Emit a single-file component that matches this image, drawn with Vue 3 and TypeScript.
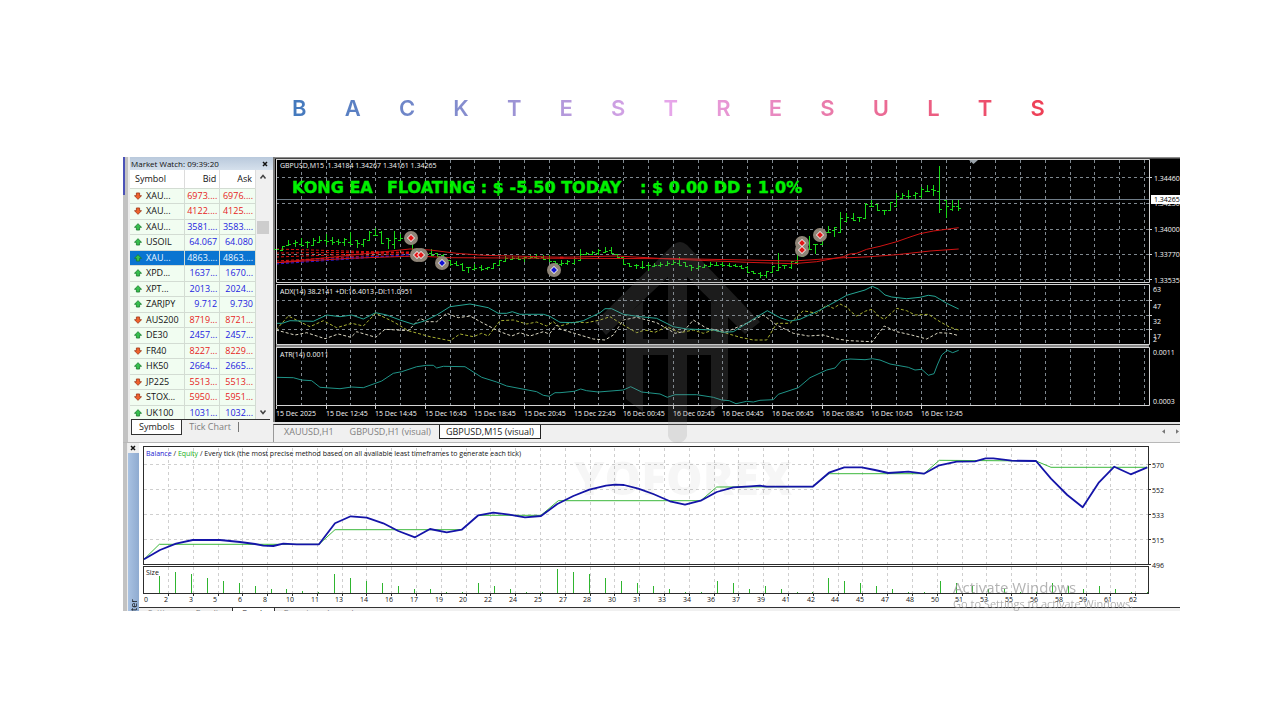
<script setup lang="ts">
import { ref } from 'vue'

const title: string[] = 'BACKTESTRESULTS'.split('')

interface Quote { symbol: string; bid: string; ask: string; up: boolean; tone: 'up' | 'down' }
const q = (symbol: string, bid: string, ask: string, up: boolean): Quote =>
  ({ symbol, bid, ask, up, tone: up ? 'up' : 'down' })

const quotes: Quote[] = [
  q('XAU...', '6973....', '6976....', false),
  q('XAU...', '4122....', '4125....', false),
  q('XAU...', '3581....', '3583....', true),
  q('USOIL', '64.067', '64.080', true),
  q('XAU...', '4863....', '4863....', true),
  q('XPD...', '1637...', '1670...', true),
  q('XPT...', '2013...', '2024...', true),
  q('ZARJPY', '9.712', '9.730', true),
  q('AUS200', '8719...', '8721...', false),
  q('DE30', '2457...', '2457...', true),
  q('FR40', '8227...', '8229...', false),
  q('HK50', '2664...', '2665...', true),
  q('JP225', '5513...', '5513...', false),
  q('STOX...', '5950...', '5951...', false),
  q('UK100', '1031...', '1032...', true),
]
const selected = ref(4)

type Pt = [number, number]
type Segment = { x: number; y: number; pts: Pt[] }

/* Samples are stored in thirds of a unit, relative to the origin of their segment. */
const trace = (segments: Segment[]): string =>
  segments
    .flatMap(s => s.pts.map(([px, py]) => `${(s.x + px / 3).toFixed(1)},${(s.y + py / 3).toFixed(1)}`))
    .join(' ')

const fastAverage = trace([
  { x: 270, y: 150, pts: [[18, 338], [200, 320], [420, 297], [480, 300], [560, 310], [640, 316], [880, 322]] },
  { x: 560, y: 150, pts: [[0, 322], [170, 318], [350, 328], [560, 337], [700, 341], [770, 335], [850, 320]] },
  { x: 850, y: 150, pts: [[0, 312], [20, 310], [50, 298], [90, 289], [140, 275], [180, 261], [210, 251], [250, 243], [326, 233]] },
])
const slowAverage = trace([
  { x: 270, y: 150, pts: [[18, 338], [240, 325], [440, 318], [540, 323], [880, 325]] },
  { x: 560, y: 150, pts: [[0, 325], [350, 326], [560, 330], [700, 333], [850, 323]] },
  { x: 850, y: 150, pts: [[0, 323], [60, 320], [140, 314], [240, 303], [326, 297]] },
])
const adxLine = trace([
  { x: 270, y: 280, pts: [[18, 130], [37, 130], [60, 122], [130, 124], [170, 105], [210, 110], [245, 105], [280, 117], [317, 98], [350, 105], [390, 120], [430, 133], [466, 122], [500, 105], [540, 80], [600, 72], [655, 83], [685, 100], [710, 100], [727, 95], [750, 103], [820, 103], [838, 108], [865, 124]] },
  { x: 560, y: 280, pts: [[0, 127], [43, 128], [70, 122], [120, 98], [135, 86], [155, 86], [190, 103], [240, 110], [290, 115], [340, 140], [380, 147], [460, 150], [490, 157], [520, 155], [600, 105], [622, 92], [660, 113], [690, 123], [720, 118], [780, 90], [830, 63], [860, 46]] },
  { x: 850, y: 280, pts: [[0, 43], [45, 30], [67, 19], [85, 27], [105, 45], [125, 51], [170, 56], [210, 52], [235, 46], [255, 49], [290, 70], [326, 87]] },
])
const plusDi = trace([
  { x: 270, y: 280, pts: [[18, 150], [55, 108], [120, 140], [160, 122], [200, 143], [245, 130], [280, 138], [317, 100], [370, 125], [415, 152], [480, 170], [540, 182], [570, 162], [610, 170], [635, 160], [655, 168], [690, 122], [730, 120], [770, 132], [800, 126], [830, 138], [850, 125], [868, 140]] },
  { x: 560, y: 280, pts: [[0, 138], [43, 126], [80, 128], [120, 120], [150, 110], [190, 135], [230, 158], [255, 150], [285, 157], [320, 140], [360, 158], [400, 150], [430, 160], [460, 150], [500, 160], [540, 172], [580, 180], [620, 180], [650, 130], [690, 130], [730, 92], [770, 100], [800, 75], [820, 85], [840, 72], [865, 84]] },
  { x: 850, y: 280, pts: [[0, 93], [20, 108], [47, 93], [67, 88], [85, 108], [103, 118], [140, 85], [170, 92], [195, 105], [235, 103], [270, 125], [300, 142], [326, 150]] },
])
const minusDi = trace([
  { x: 270, y: 280, pts: [[18, 150], [75, 165], [110, 158], [165, 176], [205, 162], [243, 172], [260, 155], [317, 172], [345, 148], [415, 152], [450, 115], [470, 125], [500, 125], [530, 100], [565, 113], [600, 108], [640, 130], [690, 155], [725, 168], [750, 158], [780, 168], [820, 155], [838, 162], [860, 135]] },
  { x: 560, y: 280, pts: [[0, 147], [43, 160], [100, 177], [135, 180], [160, 165], [190, 120], [230, 112], [260, 120], [290, 128], [345, 160], [370, 155], [400, 120], [440, 145], [500, 155], [560, 130], [610, 105], [650, 135], [700, 160], [745, 168], [790, 165], [830, 177]] },
  { x: 850, y: 280, pts: [[0, 182], [67, 185], [103, 138], [140, 155], [185, 165], [230, 177], [265, 158], [300, 160], [326, 167]] },
])
const atrLine = trace([
  { x: 270, y: 280, pts: [[18, 292], [70, 293], [95, 300], [125, 302], [150, 322], [210, 326], [245, 321], [280, 323], [335, 303], [370, 280], [395, 275], [440, 260], [470, 256], [490, 256], [500, 264], [520, 259], [585, 260], [635, 292], [680, 306], [710, 318], [800, 335], [820, 346], [838, 349], [855, 338]] },
  { x: 560, y: 280, pts: [[0, 338], [43, 334], [62, 327], [80, 332], [115, 336], [190, 330], [212, 320], [245, 336], [300, 342], [322, 352], [345, 344], [410, 344], [460, 352], [485, 360], [508, 362], [528, 371], [560, 364], [580, 366], [600, 361], [640, 359], [655, 343], [715, 323], [750, 293], [800, 270], [825, 264], [845, 241]] },
  { x: 850, y: 280, pts: [[0, 237], [45, 239], [67, 236], [90, 240], [120, 252], [175, 262], [195, 270], [215, 268], [235, 286], [252, 281], [262, 255], [275, 225], [292, 211], [308, 218], [326, 211]] },
])

/* High and low of every bar, oldest first. */
const bars: Pt[] = [
  [249, 253], [246, 251], [240, 246], [240, 247], [238, 246], [241, 248], [238, 246], [236, 243],
  [234, 245], [237, 245], [239, 245], [238, 246], [232, 245], [240, 248], [239, 247], [231, 241],
  [228, 236], [231, 244], [238, 249], [231, 249], [234, 241], [233, 243], [241, 250], [250, 259],
  [250, 256], [249, 256], [253, 257], [254, 260], [260, 266], [261, 266], [263, 271], [267, 273],
  [264, 270], [265, 271], [267, 270], [263, 269], [260, 266], [256, 262], [256, 260], [256, 260],
  [256, 262], [255, 259], [254, 259], [255, 260], [255, 262], [261, 267], [260, 266], [260, 265],
  [258, 264], [249, 261], [252, 255], [251, 255], [249, 255], [247, 253], [247, 254], [254, 258],
  [257, 265], [263, 267], [264, 269], [261, 269], [263, 271], [263, 267], [262, 267], [261, 266],
  [260, 265], [257, 266], [262, 267], [265, 271], [265, 269], [264, 268], [262, 267], [262, 266],
  [262, 267], [263, 267], [264, 267], [265, 269], [266, 273], [271, 274], [272, 278], [271, 278],
  [266, 273], [253, 271], [265, 269], [261, 269], [253, 263], [245, 257], [236, 250], [244, 254],
  [238, 245], [226, 233], [227, 237], [212, 233], [213, 222], [213, 221], [217, 222], [203, 219],
  [200, 207], [204, 211], [210, 215], [202, 211], [193, 207], [193, 199], [190, 199], [192, 199],
  [187, 198], [185, 192], [185, 196], [166, 213], [200, 218], [200, 211], [200, 211],
]
const clamp = (v: number, lo: number, hi: number): number => Math.max(lo, Math.min(hi, v))
const mid = (i: number): number => (bars[i][0] + bars[i][1]) / 2
const barPath: string = bars
  .map(([hi, lo], i) => {
    const x = Math.round(276 + i * 6.2) + 0.5
    const open = Math.round(clamp(i ? mid(i - 1) : hi, hi, lo - 1)) + 0.5
    const close = Math.round(clamp(i < bars.length - 1 ? mid(i + 1) : 208, hi, lo - 1)) + 0.5
    return `M${x} ${hi}V${lo}M${x - 2.5} ${open}H${x}M${x} ${close}H${x + 2.5}`
  })
  .join('')

const gridX: number[] = Array.from({ length: 35 }, (_, i) => Math.round(301.7 + i * 24.8) - 0.5)
const priceRows: number[] = [177.5, 203.5, 229.5, 254.5, 279.5]
const adxRows: number[] = [300.5, 315.5, 329.5]
const prices = [
  { y: 181, label: '1.34460' }, { y: 206, label: '1.34230' }, { y: 232, label: '1.34000' },
  { y: 257, label: '1.33770' }, { y: 283, label: '1.33535' },
]
const adxLabels = [
  { y: 292, label: '63' }, { y: 309, label: '47' }, { y: 324, label: '32' },
  { y: 339, label: '17' }, { y: 342, label: '2' },
]
const times: string[] = [
  '15 Dec 2025', '15 Dec 12:45', '15 Dec 14:45', '15 Dec 16:45', '15 Dec 18:45', '15 Dec 20:45', '15 Dec 22:45',
  '16 Dec 00:45', '16 Dec 02:45', '16 Dec 04:45', '16 Dec 06:45', '16 Dec 08:45', '16 Dec 10:45', '16 Dec 12:45',
]
const markers = [
  { x: 411, y: 238, c: '#e01818' }, { x: 417, y: 255, c: '#e01818' }, { x: 421, y: 255, c: '#e01818' },
  { x: 442, y: 263, c: '#1010d0' }, { x: 554, y: 270, c: '#1010d0' }, { x: 802, y: 243, c: '#e01818' },
  { x: 802, y: 250, c: '#e01818' }, { x: 820, y: 235, c: '#e01818' },
]

const balance = trace([
  { x: 120, y: 435, pts: [[72, 373], [120, 345], [168, 326], [218, 315], [300, 315], [360, 321], [405, 327], [430, 332], [460, 333], [490, 326], [530, 328], [597, 328], [645, 265], [692, 244], [740, 248], [790, 265], [835, 288], [885, 307], [930, 282], [980, 292], [1025, 284]] },
  { x: 470, y: 435, pts: [[25, 241], [70, 233], [118, 239], [165, 247], [213, 243], [262, 207], [310, 183], [358, 164], [408, 152], [435, 149], [462, 150], [505, 161], [550, 177], [600, 199], [645, 209], [692, 197], [740, 171], [790, 157], [840, 154], [870, 152], [890, 155], [1028, 155]] },
  { x: 820, y: 435, pts: [[27, 113], [73, 97], [125, 97], [165, 105], [205, 114], [265, 110], [312, 116], [358, 91], [410, 80], [465, 79], [497, 70], [520, 70], [575, 77], [648, 78], [693, 131], [742, 180], [788, 217], [837, 142], [883, 95], [932, 118], [982, 97]] },
])
const equity = trace([
  { x: 120, y: 435, pts: [[72, 373], [118, 328], [597, 328], [645, 284], [1025, 284]] },
  { x: 470, y: 435, pts: [[25, 241], [213, 241], [265, 197], [692, 197], [740, 156], [1028, 155]] },
  { x: 820, y: 435, pts: [[27, 116], [312, 116], [358, 76], [648, 78], [693, 97], [982, 97]] },
])
const lots: number[] = [
  17, 21, 19, 15, 12, 10, 7, 4, 4, 2, 1, 19, 15, 12, 10, 7, 4, 4, 1, 1, 10, 7, 4, 1, 1, 24, 21, 19, 15, 12, 10, 7,
  4, 1, 1, 12, 10, 4, 7, 4, 1, 1, 15, 12, 10, 7, 4, 1, 1, 12, 10, 7, 4, 4, 1, 1, 10, 7, 4, 7, 4, 1, 1,
]
const lotPath: string = lots.map((h, i) => `M${Math.round(143 + (i + 1) * 15.94) + 0.5} 593v${-h}`).join('')
const testerX: number[] = Array.from({ length: 40 }, (_, i) => Math.round(168 + i * 24.8) + 0.5)
const testerRows = [
  { y: 464.5, label: '570' }, { y: 489.5, label: '552' }, { y: 514.5, label: '533' },
  { y: 539.5, label: '515' }, { y: 564.5, label: '496' },
]
const tradeNumbers: number[] = [
  0, 2, 3, 5, 6, 8, 10, 11, 13, 14, 16, 17, 19, 20, 22, 24, 25, 27, 28, 30, 31, 33, 34, 36, 37, 39, 41, 42, 44, 45,
  47, 48, 50, 51, 53, 55, 56, 58, 59, 61, 62,
]
</script>

<template>
  <main class="page">
    <h1 class="title"><span v-for="(letter, i) in title" :key="i">{{ letter }}</span></h1>

    <div class="terminal">
      <div class="upper">
        <div class="edge"><i></i></div>

        <section class="watch">
          <header class="watch-head">
            <span>Market Watch: 09:39:20</span>
            <button type="button" aria-label="Close market watch">
              <svg viewBox="0 0 6 6" width="6" height="6"><path d="M1 1l4 4M5 1l-4 4" stroke="#111" stroke-width="1.5" /></svg>
            </button>
          </header>
          <div class="watch-body">
            <table>
              <thead>
                <tr><th>Symbol</th><th class="num">Bid</th><th class="num">Ask</th></tr>
              </thead>
              <tbody>
                <tr v-for="(row, i) in quotes" :key="i" :class="[row.tone, { selected: i === selected }]" @click="selected = i">
                  <td>
                    <svg viewBox="0 0 10 10" width="8" height="8" :class="{ flip: !row.up }">
                      <path d="M5 .8L9.4 5.4H7V8.8H3V5.4H.6Z" :fill="row.up ? '#35c04c' : '#f0622c'" :stroke="row.up ? '#177a2b' : '#9c3414'" stroke-width="1" />
                    </svg>{{ row.symbol }}
                  </td>
                  <td class="num">{{ row.bid }}</td>
                  <td class="num">{{ row.ask }}</td>
                </tr>
              </tbody>
            </table>
            <div class="scroll">
              <svg viewBox="0 0 8 6" width="8" height="6"><path d="M1.5 4.5L4 1.5l2.5 3" /></svg>
              <b></b>
              <svg viewBox="0 0 8 6" width="8" height="6"><path d="M1.5 1.5L4 4.5l2.5-3" /></svg>
            </div>
          </div>
          <nav class="watch-tabs">
            <button type="button" class="on">Symbols</button>
            <button type="button">Tick Chart</button>
          </nav>
        </section>

        <section class="market">
          <svg class="plot" viewBox="273 157 907 267">
            <rect x="273" y="157" width="907" height="267" fill="#000" />
            <path d="M273 157.5H1180" stroke="#8c8c8c" stroke-width="2" />
            <path d="M274 157V424" stroke="#7a7a7a" stroke-width="2" />
            <path d="M273 423H1180" stroke="#e4e4e4" stroke-width="2" />

            <g stroke="#7f888f" stroke-width="1" stroke-dasharray="3 3">
              <path v-for="x in gridX" :key="x" :d="`M${x} 160V282M${x} 286V344M${x} 349V405`" />
              <path v-for="y in priceRows" :key="y" :d="`M276 ${y}H1149`" />
              <path v-for="y in adxRows" :key="y" :d="`M276 ${y}H1149`" />
            </g>
            <path d="M276 199.5H1149" stroke="#6f7c88" />

            <g fill="none" stroke-width="1">
              <path d="M276 249L417 253M276 253L417 252M276 257L417 252M276 261L417 253" stroke="#e01010" stroke-dasharray="3 2" />
              <path d="M276 264L350 259L417 254M276 263L360 257L417 256" stroke="#2a18d8" stroke-dasharray="3 2" />
              <path :d="barPath" stroke="#18d818" />
              <polyline :points="fastAverage" stroke="#d01414" />
              <polyline :points="slowAverage" stroke="#d01414" />
              <polyline :points="plusDi" stroke="#a8b032" stroke-dasharray="3 2" />
              <polyline :points="minusDi" stroke="#dcd8c4" stroke-dasharray="3 2" />
              <polyline :points="adxLine" stroke="#26a594" />
              <polyline :points="atrLine" stroke="#1f9488" />
            </g>

            <circle v-for="(m, i) in markers" :key="'c' + i" :cx="m.x" :cy="m.y" r="7" fill="#8f8578" />
            <g v-for="(m, i) in markers" :key="'d' + i">
              <path :d="`M${m.x} ${m.y - 4}l4 4l-4 4l-4 -4z`" fill="#fff" />
              <path :d="`M${m.x} ${m.y - 3}l3 3l-3 3l-3 -3z`" :fill="m.c" />
            </g>

            <g fill="none" stroke="#d4d4d4">
              <path d="M276 159.5H1149.5V282.5H276.5V159.5" />
              <path d="M276 284.5H1149.5V344.5H276.5V284.5" />
              <path d="M276 347.5H1149.5V405.5H276.5V347.5" />
              <path d="M276 346H1149" stroke="#8a8a8a" stroke-width="2" />
              <path v-for="(t, i) in times" :key="t" :d="`M${Math.round(276 + i * 49.6) + 0.5} 406v3`" />
              <path d="M1150 177.5h2M1150 229.5h2M1150 254.5h2M1150 279.5h2M1150 300.5h2M1150 315.5h2M1150 329.5h2" />
            </g>
            <path d="M969 160h9l-4.500 4z" fill="#9aa3ab" />

            <text class="banner" x="292" y="193">KONG EA</text>
            <text class="banner" x="387" y="193">FLOATING : $ -5.50 TODAY</text>
            <text class="banner" x="640" y="193">: $ 0.00 DD : 1.0%</text>

            <g class="tiny" fill="#f6f6f6">
              <text x="280" y="168">GBPUSD,M15&nbsp; 1.34184 1.34267 1.34161 1.34265</text>
              <text x="280" y="294">ADX(14) 38.2141 +DI:16.4013 -DI:11.0951</text>
              <text x="280" y="357">ATR(14) 0.0011</text>
              <text v-for="p in prices" :key="p.label" x="1154" :y="p.y">{{ p.label }}</text>
              <text v-for="p in adxLabels" :key="p.label" x="1153" :y="p.y">{{ p.label }}</text>
              <text x="1153" y="355">0.0011</text>
              <text x="1153" y="404">0.0003</text>
              <text v-for="(t, i) in times" :key="t" :x="Math.round(276 + i * 49.6)" y="416">{{ t }}</text>
            </g>
            <rect x="1151" y="195" width="29" height="9" fill="#fff" />
            <text class="tiny" x="1154" y="202" fill="#000">1.34265</text>
          </svg>
          <nav class="chart-tabs">
            <button type="button">XAUUSD,H1</button>
            <button type="button">GBPUSD,H1 (visual)</button>
            <button type="button" class="on">GBPUSD,M15 (visual)</button>
            <span class="pager">
              <svg viewBox="0 0 4 6" width="3" height="5"><path d="M4 0v6L0 3z" fill="#777" /></svg>
              <svg viewBox="0 0 4 6" width="3" height="5"><path d="M0 0v6L4 3z" fill="#777" /></svg>
            </span>
          </nav>
        </section>
      </div>

      <section class="lower">
        <div class="edge"></div>
        <div class="tester-side">
          <button type="button" aria-label="Close tester">
            <svg viewBox="0 0 6 6" width="6" height="6"><path d="M1 1l4 4M5 1l-4 4" stroke="#111" stroke-width="1.5" /></svg>
          </button>
          <div class="tester-bar"><span>Tester</span></div>
        </div>
        <div class="tester">
          <svg class="plot" viewBox="139 443 1041 164">
            <g stroke="#cfcfcf" stroke-dasharray="3 3">
              <path v-for="x in testerX" :key="x" :d="`M${x} 448V564M${x} 567V593`" />
              <path v-for="r in testerRows.slice(0, 4)" :key="r.y" :d="`M144 ${r.y}H1148`" />
            </g>
            <path :d="lotPath" stroke="#2fb52f" />
            <polyline :points="equity" fill="none" stroke="#3cb83c" />
            <polyline :points="balance" fill="none" stroke="#1414a8" stroke-width="1.8" stroke-linejoin="round" />
            <g fill="none" stroke="#2c2c2c">
              <rect x="143.5" y="446.5" width="1005" height="118" />
              <rect x="143.5" y="566.5" width="1005" height="27" />
              <path v-for="r in testerRows" :key="r.y" :d="`M1149 ${r.y}h2`" />
              <path v-for="x in testerX" :key="x" :d="`M${x} 594v2`" />
            </g>
            <g class="tiny" fill="#111">
              <text x="146" y="456"><tspan fill="#1818d0">Balance</tspan> / <tspan fill="#18b018">Equity</tspan> / Every tick (the most precise method based on all available least timeframes to generate each tick)</text>
              <text x="146" y="575">Size</text>
              <text v-for="r in testerRows" :key="r.y" x="1152" :y="r.y + 3">{{ r.label }}</text>
              <text v-for="(n, i) in tradeNumbers" :key="n" :x="i ? Math.round(141 + i * 24.8) : 146" y="602" text-anchor="middle">{{ n }}</text>
            </g>
          </svg>
          <nav class="tester-tabs">
            <button type="button">Settings</button>
            <button type="button">Results</button>
            <button type="button" class="on">Graph</button>
            <button type="button">Report</button>
            <button type="button">Journal</button>
          </nav>
        </div>
      </section>

      <svg class="watermark" viewBox="123 157 1057 454" aria-hidden="true">
        <path class="arrow" d="M673 245q7-6 14 0L760 322L745 334L687 277V339H711V301L728 316V399L711 412V355H687V436a10 10 0 0 1-19 0V355H643V412L626 399V316L643 301V339H668V277L606 335L595 322Z" />
        <text class="brand" x="574" y="495">YOFOREX</text>
        <g class="activate">
          <text class="activate-big" x="953" y="593">Activate Windows</text>
          <text class="activate-small" x="953" y="608">Go to Settings to activate Windows.</text>
        </g>
      </svg>
    </div>
  </main>
</template>

<style>
body { margin: 0; background: #fff; }
</style>

<style scoped>
.page {
  box-sizing: border-box;
  padding: 92px 100px 40px 123px;
  font-family: "Open Sans", "Noto Sans", sans-serif;
  font-size: 9px;
  color: #111;
}
.title {
  display: flex;
  justify-content: space-between;
  margin: 0 135px 33px 169px;
  font: 600 22px/32px Inter, sans-serif;
  color: transparent;
  background: linear-gradient(90deg, #4379bd, #8c8fd0 25%, #e6a6ea 50%, #ee3f55);
  -webkit-background-clip: text;
  background-clip: text;
}
button {
  padding: 0;
  border: 0;
  background: none;
  font: inherit;
  color: inherit;
}
.terminal { position: relative; overflow: hidden; background: #f0f0f0; }
.upper { display: flex; }
.edge { box-sizing: border-box; width: 7px; flex: none; background: #c2c2c2; border-right: 2px solid #ececec; }
.edge i { display: block; width: 2px; height: 38px; background: #4b52b8; }
.lower .edge { width: 5px; border-right-width: 1px; }

.watch { width: 143px; flex: none; display: flex; flex-direction: column; background: #f0f0f0; }
.watch-head {
  display: flex;
  justify-content: space-between;
  align-items: center;
  height: 13px;
  padding: 0 5px 0 1px;
  background: linear-gradient(#b9c9dc, #d5e0ec);
  font-size: 8px;
  line-height: 12px;
}
.watch-head span { font-weight: 500; }
.watch-head button { display: flex; }
.watch-body { display: flex; height: 249px; overflow: hidden; }
table { width: 126px; height: 250px; border-collapse: collapse; table-layout: fixed; background: #fff; }
th, td { box-sizing: border-box; padding: 0; font-weight: 400; text-align: left; line-height: 12px; white-space: nowrap; overflow: hidden; }
th:first-child { width: 54px; }
thead tr { height: 18px; }
th { border-right: 1px solid #dcdcdc; padding-left: 5px; }
th.num { padding: 0 3px 0 0; }
td { border: 1px solid #d3dcd3; border-width: 1px 1px 0 0; background: #f1fdf1; }
td:first-child { padding-left: 4px; }
.num { text-align: right; padding-right: 2px; }
td svg { margin-right: 4px; vertical-align: -1px; }
.flip { transform: rotate(180deg); }
.up .num { color: #1c1ce0; }
.down .num { color: #e61c1c; }
.selected td, .selected .num { background: #0a74d1; color: #e8f4ff; }
.scroll {
  display: flex;
  flex-direction: column;
  align-items: center;
  justify-content: space-between;
  width: 14px;
  padding: 4px 0 4px;
  box-sizing: border-box;
}
.scroll b { width: 12px; height: 13px; margin-bottom: 134px; background: #cdcdcd; }
.scroll path { fill: none; stroke: #444; stroke-width: 1.5; }
.watch-tabs { display: flex; align-items: flex-start; height: 17px; margin: 0 3px 0 1px; border-top: 1px solid #333; line-height: 14px; }
.watch-tabs button { padding: 0 7px; color: #808080; }
.watch-tabs button:last-child { line-height: 10px; margin-top: 2px; border-right: 1px solid #777; }
.watch-tabs .on { border: 1px solid #333; border-top: 0; background: #fff; color: #1c1c1c; }

.market { flex: 1; min-width: 0; }
.plot { display: block; width: 100%; height: auto; }
.chart-tabs { display: flex; align-items: flex-start; height: 17px; border-top: 1px solid #333; border-left: 1px solid #999; color: #808080; }
.chart-tabs button { height: 14px; padding: 0 8px; line-height: 14px; }
.chart-tabs button:first-child { margin-left: 2px; }
.chart-tabs .on { padding: 0 6px; border: 1px solid #222; border-top: 0; background: #fff; color: #1c1c1c; }
.pager { display: flex; gap: 11px; margin: 4px 1px 0 auto; }

.lower { display: flex; border-top: 1px solid #b8b8b8; background: #fff; }
.tester-side { width: 11px; flex: none; display: flex; flex-direction: column; background: #f0f0f0; }
.tester-side button { display: flex; align-items: center; height: 10px; padding-left: 2px; }
.tester-bar { flex: 1; display: flex; align-items: flex-end; background: linear-gradient(90deg, #a9c2e2, #8fabd0); overflow: hidden; }
.tester-bar span { writing-mode: vertical-rl; transform: rotate(180deg); line-height: 11px; margin-bottom: -14px; }
.tester { flex: 1; min-width: 0; }
.tester-tabs { display: flex; height: 3px; overflow: hidden; border-top: 1px solid #333; background: #f0f0f0; font-size: 8px; line-height: 6px; color: #777; }
.tester-tabs button { height: 8px; padding: 0 9px; }
.tester-tabs .on { border: 1px solid #333; border-width: 0 1px; background: #fff; color: #1c1c1c; }

.tiny { font-size: 7px; }
.banner { font: 700 16px "DejaVu Sans", sans-serif; fill: #00f000; stroke: #00f000; stroke-width: .4; }
.watermark { position: absolute; inset: 0; width: 100%; height: auto; pointer-events: none; }
.arrow { fill: #8c8c8c; opacity: .2; }
.brand { font: 800 46px "Open Sans", sans-serif; fill: #000; opacity: .03; }
.activate { fill: #9a9a9a; opacity: .75; }
.activate-big { font-size: 15px; }
.activate-small { font-size: 11px; }
</style>
